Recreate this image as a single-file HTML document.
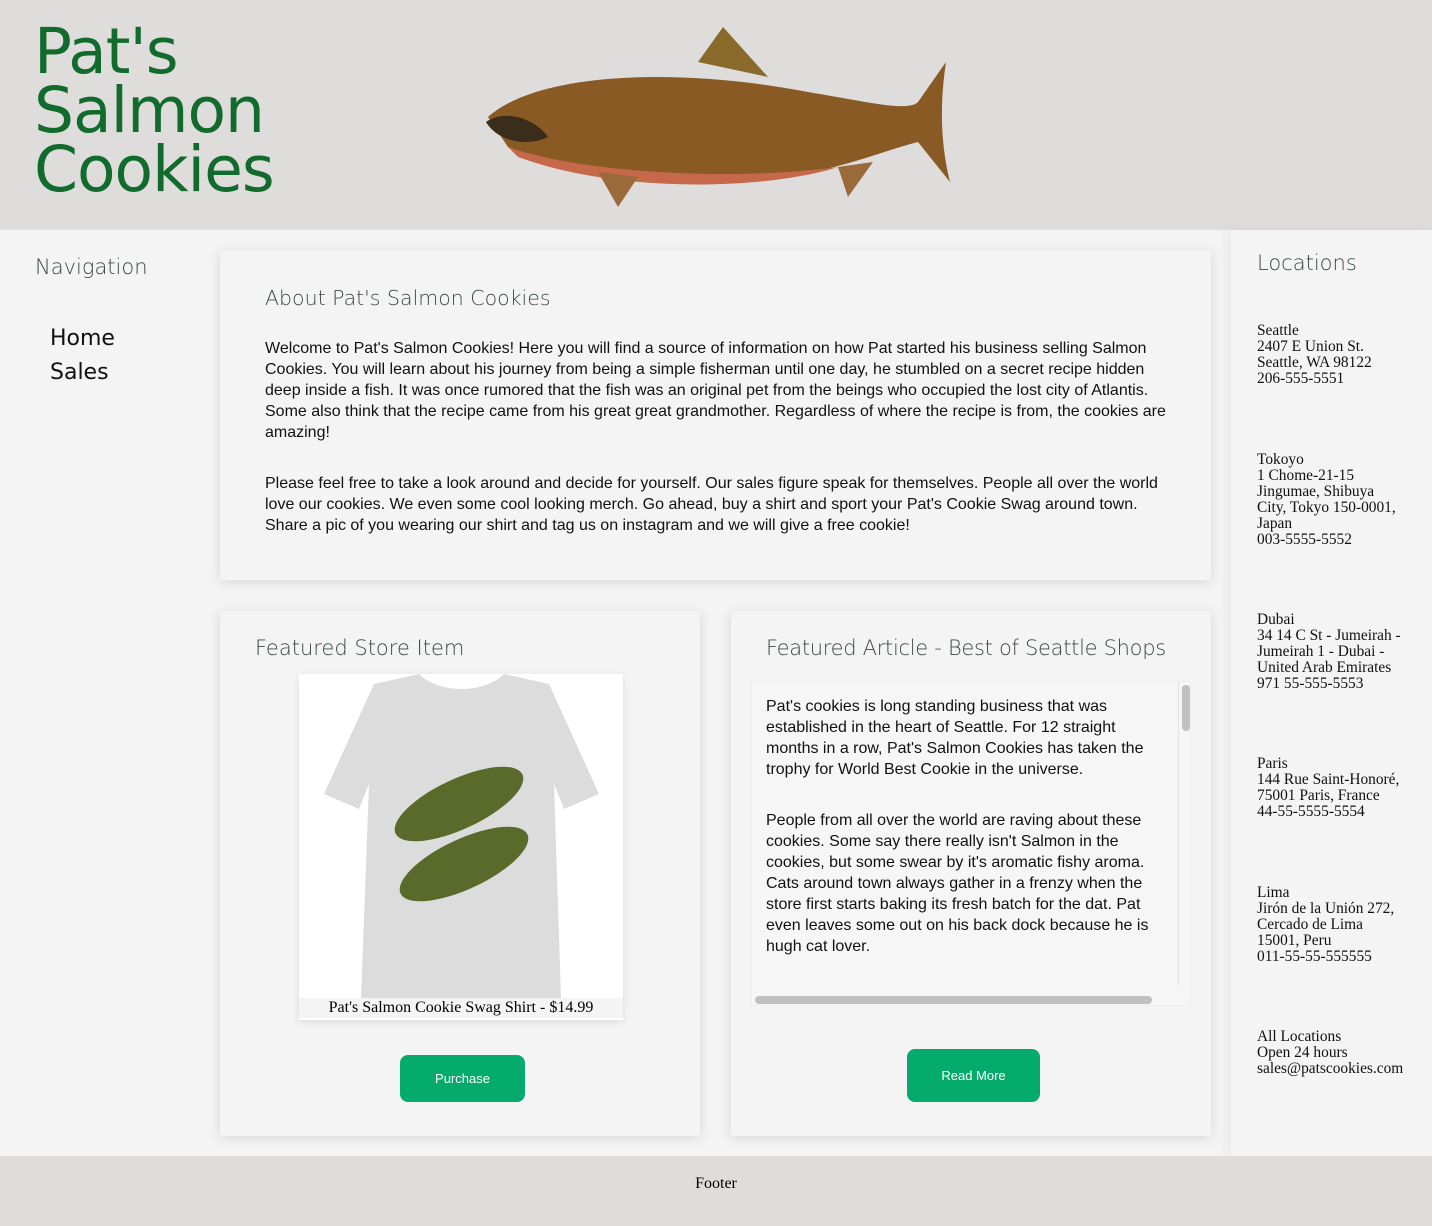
<!DOCTYPE html>
<html><head><meta charset="utf-8"><style>
*{margin:0;padding:0;box-sizing:border-box}
body{width:1432px;height:1226px;background:#f4f4f4;font-family:"Liberation Sans",Arial,sans-serif;position:relative;overflow:hidden}
.hdr{position:absolute;left:0;top:0;width:1432px;height:230px;background:#dfdcdc}
.title{position:absolute;left:34px;top:22px;font-size:63px;line-height:59px;color:#116b2c;font-family:"DejaVu Sans","Liberation Sans",sans-serif;font-weight:400;letter-spacing:-1px}
.h{font-family:"DejaVu Sans","Liberation Sans",sans-serif;font-weight:300;color:#3a4a44;position:absolute}
.card{position:absolute;background:#f4f4f4;box-shadow:0 2px 12px rgba(0,0,0,.12)}
p.t{font-size:16px;line-height:21px;color:#111}
.loc{position:absolute;left:1257px;font-family:"Liberation Serif",serif;font-size:15.4px;line-height:16px;color:#111}
.btn{position:absolute;background:#05aa6d;color:#fff;font-size:13px;border-radius:8px;display:flex;align-items:center;justify-content:center}
.side{position:absolute;left:1231px;top:230px;width:201px;height:926px;background:#f4f4f4;box-shadow:-4px 0 10px rgba(0,0,0,.05)}
.footer{position:absolute;left:0;top:1156px;width:1432px;height:70px;background:#dfdcdc;font-family:"Liberation Serif",serif;font-size:16px;text-align:center;padding-top:19px}
</style></head><body>
<div class="hdr"></div>
<div class="title">Pat's<br>Salmon<br>Cookies</div>
<svg style="position:absolute;left:478px;top:22px" width="480" height="185" viewBox="0 0 480 185">
<path d="M220 40 L245 5 L290 55 Z" fill="#8a6a2a"/>
<path d="M10 95 C60 50 200 45 330 70 C390 80 430 90 440 80 L468 40 C462 80 462 120 472 160 L440 120 C400 130 360 150 280 158 C200 165 90 160 30 125 Z" fill="#8a5a25"/>
<path d="M30 125 C100 150 250 160 360 145 C300 165 150 175 40 135 Z" fill="#c6694a"/>
<path d="M8 100 C30 85 60 100 70 115 C50 125 20 120 8 100Z" fill="#3a2d1c"/>
<path d="M120 150 L140 185 L160 155Z M360 145 L370 175 L395 140Z" fill="#9a6a3a"/>
</svg>
<div class="h" style="left:35px;top:255px;font-size:21px">Navigation</div>
<div style="position:absolute;left:50px;top:322px;font-family:'DejaVu Sans',sans-serif;font-size:22px;line-height:34px;color:#111">Home<br>Sales</div>
<div class="card" style="left:220px;top:250px;width:991px;height:330px"></div>
<div class="h" style="left:265px;top:286px;font-size:20.5px">About Pat's Salmon Cookies</div>
<div style="position:absolute;left:265px;top:338px;width:910px">
<p class="t">Welcome to Pat's Salmon Cookies! Here you will find a source of information on how Pat started his business selling Salmon Cookies. You will learn about his journey from being a simple fisherman until one day, he stumbled on a secret recipe hidden deep inside a fish. It was once rumored that the fish was an original pet from the beings who occupied the lost city of Atlantis. Some also think that the recipe came from his great great grandmother. Regardless of where the recipe is from, the cookies are amazing!</p>
<p class="t" style="margin-top:30px">Please feel free to take a look around and decide for yourself. Our sales figure speak for themselves. People all over the world love our cookies. We even some cool looking merch. Go ahead, buy a shirt and sport your Pat's Cookie Swag around town. Share a pic of you wearing our shirt and tag us on instagram and we will give a free cookie!</p></div>
<div class="card" style="left:220px;top:611px;width:480px;height:525px"></div>
<div class="h" style="left:255px;top:636px;font-size:21px">Featured Store Item</div>
<div style="position:absolute;left:299px;top:674px;width:324px;height:346px;background:#fff;box-shadow:0 2px 8px rgba(0,0,0,.1)">
<svg width="324" height="324" viewBox="0 0 324 324"><path d="M75 10 L120 0 C140 20 185 20 205 0 L250 10 L300 120 L265 135 L255 110 L262 324 L62 324 L70 110 L60 135 L25 120 Z" fill="#dcdcdc"/>
<ellipse cx="160" cy="130" rx="70" ry="25" transform="rotate(-25 160 130)" fill="#5a6a2a"/><ellipse cx="165" cy="190" rx="70" ry="25" transform="rotate(-25 165 190)" fill="#5a6a2a"/></svg>
<div style="position:absolute;left:0;top:324px;width:324px;text-align:center;font-family:'Liberation Serif',serif;font-size:16px;line-height:20px;background:#f4f4f4">Pat's Salmon Cookie Swag Shirt - $14.99</div></div>
<div class="btn" style="left:400px;top:1055px;width:125px;height:47px">Purchase</div>
<div class="card" style="left:731px;top:611px;width:480px;height:525px"></div>
<div class="h" style="left:766px;top:636px;font-size:21px;letter-spacing:-0.3px">Featured Article - Best of Seattle Shops</div>
<div style="position:absolute;left:751px;top:681px;width:440px;height:325px;background:#f6f6f6;border:1px solid #eee;overflow:hidden">
<div style="position:absolute;left:14px;top:14px;width:390px">
<p class="t">Pat's cookies is long standing business that was established in the heart of Seattle. For 12 straight months in a row, Pat's Salmon Cookies has taken the trophy for World Best Cookie in the universe.</p>
<p class="t" style="margin-top:30px">People from all over the world are raving about these cookies. Some say there really isn't Salmon in the cookies, but some swear by it's aromatic fishy aroma. Cats around town always gather in a frenzy when the store first starts baking its fresh batch for the dat. Pat even leaves some out on his back dock because he is hugh cat lover.</p>
<p class="t" style="margin-top:30px">Celebrities are even talking about his cookies and the</p></div>
<div style="position:absolute;left:0;top:303px;width:440px;height:22px;background:#f6f6f6"></div>
<div style="position:absolute;left:3px;top:314px;width:397px;height:8px;border-radius:4px;background:#c0c0c0"></div>
<div style="position:absolute;left:426px;top:0;width:1px;height:303px;background:#e4e4e4"></div>
<div style="position:absolute;left:430px;top:3px;width:8px;height:46px;border-radius:4px;background:#c0c0c0"></div></div>
<div class="btn" style="left:907px;top:1049px;width:133px;height:53px">Read More</div>
<div class="side"></div>
<div class="h" style="left:1257px;top:251px;font-size:21px">Locations</div>
<div class="loc" style="top:323px">Seattle<br>2407 E Union St.<br>Seattle, WA 98122<br>206-555-5551</div>
<div class="loc" style="top:452px">Tokoyo<br>1 Chome-21-15<br>Jingumae, Shibuya<br>City, Tokyo 150-0001,<br>Japan<br>003-5555-5552</div>
<div class="loc" style="top:612px">Dubai<br>34 14 C St - Jumeirah -<br>Jumeirah 1 - Dubai -<br>United Arab Emirates<br>971 55-555-5553</div>
<div class="loc" style="top:756px">Paris<br>144 Rue Saint-Honoré,<br>75001 Paris, France<br>44-55-5555-5554</div>
<div class="loc" style="top:885px">Lima<br>Jirón de la Unión 272,<br>Cercado de Lima<br>15001, Peru<br>011-55-55-555555</div>
<div class="loc" style="top:1029px">All Locations<br>Open 24 hours<br>sales@patscookies.com</div>
<div class="footer">Footer</div>
</body></html>
